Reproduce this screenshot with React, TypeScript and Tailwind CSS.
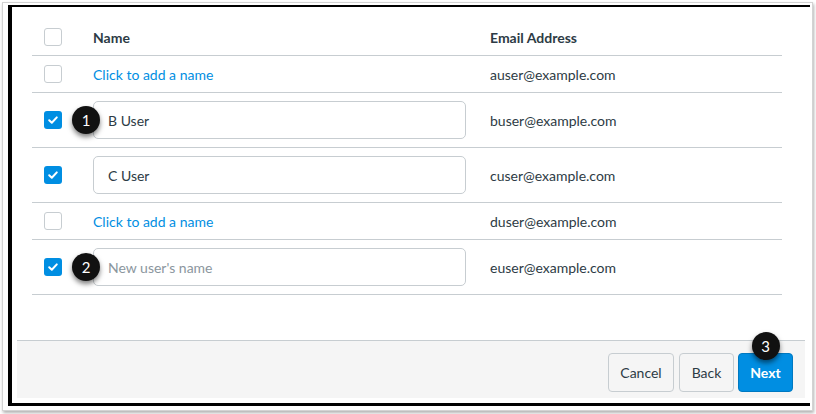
import React from 'react';

type Row =
  | { kind: 'link'; email: string }
  | { kind: 'input'; email: string; value?: string; placeholder?: string; badge?: number };

const rows: Row[] = [
  { kind: 'link', email: 'auser@example.com' },
  { kind: 'input', email: 'buser@example.com', value: 'B User', badge: 1 },
  { kind: 'input', email: 'cuser@example.com', value: 'C User' },
  { kind: 'link', email: 'duser@example.com' },
  { kind: 'input', email: 'euser@example.com', placeholder: "New user's name", badge: 2 },
];

function Badge({ n }: { n: number }) {
  return (
    <span className="flex items-center justify-center w-[28px] h-[28px] rounded-full bg-[#111] text-white text-[15px] leading-none shadow-[0_3px_5px_rgba(0,0,0,0.5)]">
      {n}
    </span>
  );
}

function Checkbox({ checked }: { checked?: boolean }) {
  if (checked) {
    return (
      <span className="flex items-center justify-center w-[18px] h-[18px] rounded-[3px] bg-[#008EE2]">
        <svg width="12" height="12" viewBox="0 0 12 12" fill="none">
          <path d="M2.2 6.3 L4.8 8.8 L9.8 3.4" stroke="white" strokeWidth="2" strokeLinecap="round" strokeLinejoin="round" />
        </svg>
      </span>
    );
  }
  return <span className="block w-[18px] h-[18px] rounded-[3px] border border-[#c7cdd1] bg-white" />;
}

function TableRow({ row }: { row: Row }) {
  const isInput = row.kind === 'input';
  return (
    <div className={`flex items-center border-b border-[#c7cdd1] ${isInput ? 'h-[55px]' : 'h-[37px]'}`}>
      <div className="w-[61px] pl-[12px]">
        <Checkbox checked={isInput} />
      </div>
      <div className="w-[397px] relative">
        {row.kind === 'link' ? (
          <span className="text-[14px] text-[#008EE2]">Click to add a name</span>
        ) : (
          <>
            <div className="w-[373px] h-[38px] rounded-[5px] border border-[#c7cdd1] bg-white flex items-center pl-[14px] text-[14px]">
              {row.value ? (
                <span className="text-[#2d3b45]">{row.value}</span>
              ) : (
                <span className="text-[#8b969e]">{row.placeholder}</span>
              )}
            </div>
            {row.badge && (
              <div className="absolute left-[-21px] top-1/2 -translate-y-1/2">
                <Badge n={row.badge} />
              </div>
            )}
          </>
        )}
      </div>
      <div className="flex-1 text-[14px] text-[#2d3b45]">{row.email}</div>
    </div>
  );
}

export default function App() {
  return (
    <div className="w-[816px] h-[414px] bg-white overflow-hidden font-['Lato',sans-serif]">
      <div className="ml-[2px] mt-[2px] w-[811px] h-[409px] border border-[#d3d3d3] shadow-[1px_2px_3px_rgba(0,0,0,0.3)] pl-[5px] pt-[2px]">
        <div className="w-[802px] h-[401px] border-l-4 border-t-2 border-b-[3px] border-black flex flex-col">
          <div className="pl-[20px] pt-[12px] w-[770px]">
            <div className="flex items-center h-[37px] border-b border-[#c7cdd1]">
              <div className="w-[61px] pl-[12px]">
                <Checkbox />
              </div>
              <div className="w-[397px] text-[14px] font-bold text-[#2d3b45]">Name</div>
              <div className="flex-1 text-[14px] font-bold text-[#2d3b45]">Email Address</div>
            </div>
            {rows.map((r, i) => (
              <TableRow key={i} row={r} />
            ))}
          </div>
          <div className="mt-auto mx-[5px] mb-[5px] h-[58px] bg-[#f5f5f5] border-t border-[#c7cdd1] flex justify-end items-start pt-[12px] pr-[12px] gap-[4px]">
            <button className="w-[66px] h-[39px] rounded-[4px] border border-[#c7cdd1] bg-[#f5f5f5] text-[14px] text-[#2d3b45] mr-[1px]">
              Cancel
            </button>
            <button className="w-[55px] h-[39px] rounded-[4px] border border-[#c7cdd1] bg-[#f5f5f5] text-[14px] text-[#2d3b45]">
              Back
            </button>
            <div className="relative">
              <button className="w-[55px] h-[39px] rounded-[4px] border border-[#0079c1] bg-[#008EE2] text-[14px] font-bold text-white">
                Next
              </button>
              <div className="absolute top-[-21px] left-1/2 -translate-x-1/2">
                <Badge n={3} />
              </div>
            </div>
          </div>
        </div>
      </div>
    </div>
  );
}
